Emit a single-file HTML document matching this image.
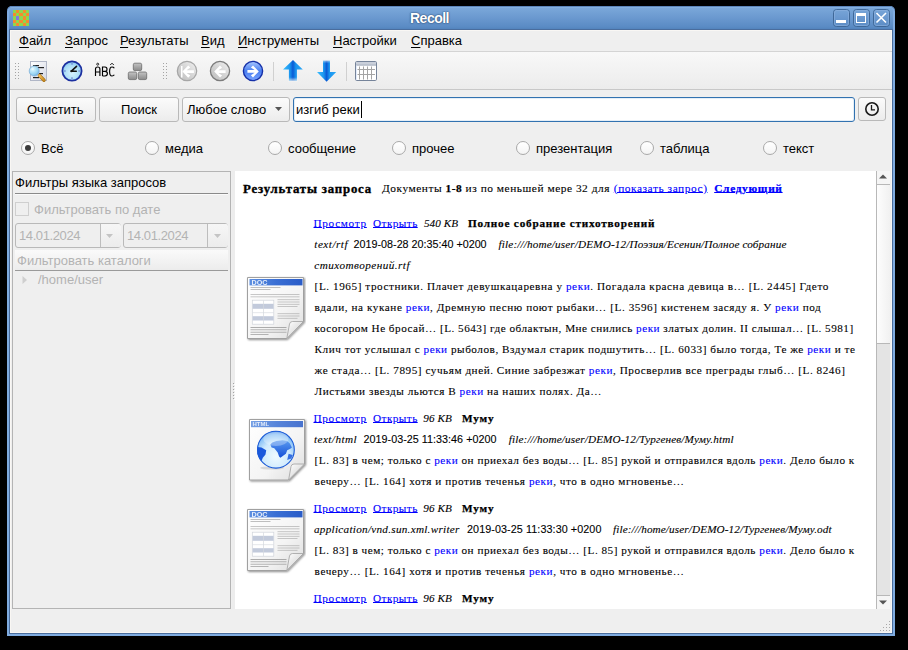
<!DOCTYPE html>
<html><head><meta charset="utf-8">
<style>
html,body{margin:0;padding:0;}
body{width:908px;height:650px;background:#000;position:relative;overflow:hidden;font-family:"Liberation Sans",sans-serif;font-size:13px;color:#000;}
.a{position:absolute;}
.t{position:absolute;white-space:nowrap;line-height:15px;}
.u{text-decoration:underline;text-underline-offset:1.5px;}
#win{left:7px;top:6px;width:888px;height:630px;background:#80ace0;border-radius:5px 5px 0 0;box-shadow:inset 0 1px 0 #5d86bb;}
#title{left:9px;top:7px;width:884px;height:22px;border-radius:4px 4px 0 0;background:linear-gradient(#8db9e7 0px,#7aa7d9 1px,#6a98cf 11px,#5a8bc4 20px,#5283bd 22px);}
#client{left:11px;top:31px;width:880px;height:601px;background:#efefef;}
.menu span{position:absolute;top:33px;line-height:15px;}
.tb{left:10px;top:52px;width:882px;height:37px;background:linear-gradient(#f8f8f8,#ececec);}
.btn{position:absolute;box-sizing:border-box;border:1px solid #b9b9b9;border-radius:3px;background:linear-gradient(#fbfbfb,#ececec);}
.radio{position:absolute;box-sizing:border-box;width:14px;height:14px;border-radius:50%;border:1px solid #a9a9a9;background:linear-gradient(#fff,#f4f4f4);}
.res{font-family:"Liberation Serif",serif;font-size:12.4px;}
.lk{color:#0000ff;text-decoration:underline;text-underline-offset:0px;}
.hl{color:#0000ff;}
.dis{color:#b3b3b3;}
.rl{position:absolute;white-space:nowrap;line-height:21px;font-family:"Liberation Serif",serif;-webkit-text-stroke:0.1px currentColor;}
.rl b{-webkit-text-stroke:0.25px currentColor;}
.sans{font-family:"Liberation Sans",sans-serif;font-size:10.75px;-webkit-text-stroke:0.1px currentColor;}
</style></head><body>
<!-- window frame -->
<div class="a" id="win"></div>
<div class="a" id="title"></div>
<div class="a" style="left:9px;top:29px;width:884px;height:605px;background:#4a6d9d"></div>
<div class="a" style="left:10px;top:30px;width:882px;height:603px;background:#f9f7f4"></div>
<!-- app icon -->
<svg class="a" style="left:13px;top:10px" width="16" height="16" viewBox="0 0 5 5" shape-rendering="crispEdges">
<rect width="5" height="5" fill="#8cd84e"/>
<rect x="1" y="0" width="1" height="1" fill="#f58a2e"/><rect x="3" y="0" width="1" height="1" fill="#f58a2e"/>
<rect x="0" y="1" width="1" height="1" fill="#f58a2e"/><rect x="2" y="1" width="1" height="1" fill="#f58a2e"/><rect x="4" y="1" width="1" height="1" fill="#f58a2e"/>
<rect x="1" y="2" width="1" height="1" fill="#8577e0"/><rect x="3" y="2" width="1" height="1" fill="#f58a2e"/>
<rect x="0" y="3" width="1" height="1" fill="#f58a2e"/><rect x="2" y="3" width="1" height="1" fill="#f58a2e"/><rect x="4" y="3" width="1" height="1" fill="#f58a2e"/>
<rect x="1" y="4" width="1" height="1" fill="#f58a2e"/><rect x="3" y="4" width="1" height="1" fill="#f58a2e"/>
</svg>
<div class="t" style="left:410px;top:10px;font-size:14px;font-weight:bold;color:#fff;line-height:17px;letter-spacing:-0.5px;text-shadow:0 0 1px #27476f,0 0 2px #27476f">Recoll</div>
<!-- title buttons -->
<svg class="a" style="left:832px;top:8px" width="60" height="20">
 <g fill="none">
  <rect x="1.5" y="1.5" width="16" height="17" rx="3" stroke="#3f6898" stroke-width="1"/>
  <rect x="2.5" y="2.5" width="14" height="15" rx="2" stroke="#8db3e0" stroke-width="1" opacity="0.6"/>
  <rect x="21.5" y="1.5" width="16" height="17" rx="3" stroke="#3f6898" stroke-width="1"/>
  <rect x="22.5" y="2.5" width="14" height="15" rx="2" stroke="#8db3e0" stroke-width="1" opacity="0.6"/>
  <rect x="41.5" y="1.5" width="16" height="17" rx="3" stroke="#3f6898" stroke-width="1"/>
  <rect x="42.5" y="2.5" width="14" height="15" rx="2" stroke="#8db3e0" stroke-width="1" opacity="0.6"/>
 </g>
 <rect x="4" y="12" width="10" height="3" fill="#fff"/>
 <rect x="24.5" y="5.5" width="9" height="9" fill="none" stroke="#fff" stroke-width="1"/>
 <rect x="24" y="5" width="10" height="3" fill="#fff"/>
 <path d="M44.5 5 L54 14.5 M54 5 L44.5 14.5" stroke="#fff" stroke-width="1.6"/>
</svg>
<!-- client -->
<div class="a" id="client"></div>
<!-- menu -->
<div class="menu">
<span style="left:19px"><span class="u" style="position:static">Ф</span>айл</span>
<span style="left:65px"><span class="u" style="position:static">З</span>апрос</span>
<span style="left:120px"><span class="u" style="position:static">Р</span>езультаты</span>
<span style="left:201px"><span class="u" style="position:static">В</span>ид</span>
<span style="left:238px"><span class="u" style="position:static">И</span>нструменты</span>
<span style="left:333px"><span class="u" style="position:static">Н</span>астройки</span>
<span style="left:411px"><span class="u" style="position:static">С</span>правка</span>
</div>
<div class="a" style="left:10px;top:51px;width:882px;height:1px;background:#d4d4d4"></div>
<div class="a tb"></div>
<div class="a" style="left:10px;top:89px;width:882px;height:1px;background:#c8c8c8"></div>

<!-- toolbar grips -->
<svg class="a" style="left:15px;top:62px" width="5" height="18"><g fill="#a4a4a4">
<rect x="0" y="1" width="1" height="1"/><rect x="3" y="1" width="1" height="1"/>
<rect x="0" y="4" width="1" height="1"/><rect x="3" y="4" width="1" height="1"/>
<rect x="0" y="7" width="1" height="1"/><rect x="3" y="7" width="1" height="1"/>
<rect x="0" y="10" width="1" height="1"/><rect x="3" y="10" width="1" height="1"/>
<rect x="0" y="13" width="1" height="1"/><rect x="3" y="13" width="1" height="1"/>
<rect x="0" y="16" width="1" height="1"/><rect x="3" y="16" width="1" height="1"/>
</g></svg>
<svg class="a" style="left:163px;top:62px" width="5" height="18"><g fill="#a4a4a4">
<rect x="0" y="1" width="1" height="1"/><rect x="3" y="1" width="1" height="1"/>
<rect x="0" y="4" width="1" height="1"/><rect x="3" y="4" width="1" height="1"/>
<rect x="0" y="7" width="1" height="1"/><rect x="3" y="7" width="1" height="1"/>
<rect x="0" y="10" width="1" height="1"/><rect x="3" y="10" width="1" height="1"/>
<rect x="0" y="13" width="1" height="1"/><rect x="3" y="13" width="1" height="1"/>
<rect x="0" y="16" width="1" height="1"/><rect x="3" y="16" width="1" height="1"/>
</g></svg>
<!-- search icon -->
<svg class="a" style="left:26px;top:58px" width="24" height="26" viewBox="0 0 24 26">
 <defs>
  <linearGradient id="pg" x1="0" y1="0" x2="1" y2="1"><stop offset="0" stop-color="#ffffff"/><stop offset="1" stop-color="#d4d8e4"/></linearGradient>
  <radialGradient id="lens" cx="0.35" cy="0.3" r="0.75"><stop offset="0" stop-color="#f4fcff"/><stop offset="0.25" stop-color="#c8ecfa"/><stop offset="0.7" stop-color="#98d4f2"/><stop offset="1" stop-color="#70aee0"/></radialGradient>
  <linearGradient id="hd" x1="0" y1="0" x2="1" y2="1"><stop offset="0" stop-color="#f5c35a"/><stop offset="1" stop-color="#c88a20"/></linearGradient>
 </defs>
 <rect x="4.5" y="3.5" width="16" height="19" fill="url(#pg)" stroke="#b0b6c6"/>
 <rect x="7" y="7" width="6" height="1.2" fill="#222"/>
 <rect x="12" y="9" width="6" height="1.2" fill="#222"/>
 <rect x="13" y="15" width="4" height="1.2" fill="#222"/>
 <rect x="7" y="19" width="6" height="1.2" fill="#222"/>
 <path d="M13.4 17.4 L18 22.2" stroke="#a8741c" stroke-width="3.4" stroke-linecap="round"/><path d="M13.4 17.4 L18 22.2" stroke="url(#hd)" stroke-width="2.2" stroke-linecap="round"/>
 <circle cx="8.2" cy="13" r="5" fill="url(#lens)" stroke="#7fb0d8" stroke-width="0.8"/>
</svg>
<!-- clock icon -->
<svg class="a" style="left:61px;top:60px" width="22" height="22" viewBox="0 0 22 22">
 <defs><radialGradient id="cf" cx="0.5" cy="0.6" r="0.6"><stop offset="0" stop-color="#d8f2ff"/><stop offset="0.7" stop-color="#a8dcf6"/><stop offset="1" stop-color="#7cc0ec"/></radialGradient></defs>
 <circle cx="11" cy="11" r="9.6" fill="url(#cf)" stroke="#1b2fa0" stroke-width="1.8"/>
 <g fill="#6a7fd0"><rect x="10.3" y="3.2" width="1.4" height="1.4"/><rect x="10.3" y="17.4" width="1.4" height="1.4"/><rect x="3.2" y="10.3" width="1.4" height="1.4"/><rect x="17.4" y="10.3" width="1.4" height="1.4"/></g>
 <path d="M15.5 6.3 L10.4 11.2 L15.3 11.2" fill="none" stroke="#111" stroke-width="1.6" stroke-linecap="round" stroke-linejoin="round"/>
 <circle cx="10.4" cy="11.2" r="1.1" fill="#111"/>
</svg>
<!-- ABC -->
<svg class="a" style="left:94px;top:62px" width="22" height="16" viewBox="0 0 22 16">
 <g fill="none" stroke="#000" stroke-width="1.15">
  <path d="M1.5 14 V7 Q1.5 5 3.7 5 Q5.9 5 5.9 7 V14 M1.5 10 H5.9"/>
  <path d="M8.5 14 V5 H11 Q13 5 13 7.2 Q13 9.3 11 9.3 H8.5 M11 9.3 Q13.4 9.3 13.4 11.6 Q13.4 14 11 14 H8.5"/>
  <path d="M20.3 6.2 Q19.6 5 18 5 Q15.6 5 15.6 9.5 Q15.6 14 18 14 Q19.6 14 20.3 12.8"/>
  <path d="M16.2 3 L18 1.2 L19.8 3" stroke-width="0.9"/>
 </g>
 <circle cx="3.7" cy="2.2" r="1" fill="none" stroke="#000" stroke-width="0.8"/>
</svg>
<!-- blocks -->
<svg class="a" style="left:127px;top:62px" width="22" height="19" viewBox="0 0 22 19">
 <defs><linearGradient id="bk" x1="0" y1="0" x2="0" y2="1"><stop offset="0" stop-color="#c4c4c4"/><stop offset="1" stop-color="#8a8a8a"/></linearGradient></defs>
 <rect x="6.3" y="1.2" width="8.4" height="7.4" rx="1.5" fill="url(#bk)" stroke="#6a6a6a" stroke-width="0.8"/>
 <rect x="1.3" y="10" width="8.4" height="7.6" rx="1.5" fill="url(#bk)" stroke="#6a6a6a" stroke-width="0.8"/>
 <rect x="11.3" y="10" width="8.4" height="7.6" rx="1.5" fill="url(#bk)" stroke="#6a6a6a" stroke-width="0.8"/>
</svg>
<!-- first/prev/next -->
<svg class="a" style="left:176px;top:60px" width="22" height="22" viewBox="0 0 22 22">
 <defs><linearGradient id="gr1" x1="1" y1="0" x2="0" y2="1"><stop offset="0" stop-color="#f2f2f2"/><stop offset="0.5" stop-color="#d4d4d4"/><stop offset="1" stop-color="#bcbcbc"/></linearGradient></defs>
 <circle cx="11" cy="11" r="9.7" fill="url(#gr1)" stroke="#a6a6a6" stroke-width="1.2"/>
 <rect x="5" y="6" width="1.5" height="11.5" fill="#fff"/>
 <path d="M6.4 11.6 L12.2 5.5 L14.3 7.6 L10.6 10.3 H17.9 V12.9 H10.6 L14.3 15.6 L12.2 17.7 Z" fill="#fff"/>
</svg>
<svg class="a" style="left:209px;top:60px" width="22" height="22" viewBox="0 0 22 22">
 <circle cx="11" cy="11" r="9.6" fill="url(#gr1)" stroke="#7c7c7c" stroke-width="1.3"/>
 <path d="M5.2 11.6 L11 5.6 L13.1 7.7 L9.4 10.3 H16.6 V12.9 H9.4 L13.1 15.5 L11 17.6 Z" fill="#fff"/>
</svg>
<svg class="a" style="left:242px;top:60px" width="22" height="22" viewBox="0 0 22 22">
 <defs><linearGradient id="bl1" x1="0" y1="0" x2="0" y2="1"><stop offset="0" stop-color="#a8c8ff"/><stop offset="0.5" stop-color="#4a7ef0"/><stop offset="1" stop-color="#7aa4ff"/></linearGradient></defs>
 <circle cx="11" cy="11" r="9.6" fill="url(#bl1)" stroke="#1530a8" stroke-width="1.4"/>
 <path d="M16.8 11.4 L11 5.4 L8.9 7.5 L12.6 10.1 H5.4 V12.7 H12.6 L8.9 15.3 L11 17.4 Z" fill="#fff"/>
</svg>
<div class="a" style="left:273px;top:62px;width:1px;height:19px;background:#d0d0d0"></div>
<!-- up/down arrows -->
<svg class="a" style="left:282px;top:59px" width="22" height="23" viewBox="0 0 22 23">
 <defs><linearGradient id="ar" x1="0" y1="0" x2="1" y2="0"><stop offset="0" stop-color="#3cc0ff"/><stop offset="0.35" stop-color="#1a94ee"/><stop offset="0.5" stop-color="#0a5ad4"/><stop offset="0.65" stop-color="#1a94ee"/><stop offset="1" stop-color="#2aa8f8"/></linearGradient>
 <linearGradient id="arfu" x1="0" y1="0" x2="0" y2="1"><stop offset="0" stop-color="#f2f2f2" stop-opacity="0"/><stop offset="0.6" stop-color="#f2f2f2" stop-opacity="0"/><stop offset="1" stop-color="#f2f2f2" stop-opacity="0.95"/></linearGradient>
 <linearGradient id="arfd" x1="0" y1="0" x2="0" y2="1"><stop offset="0" stop-color="#f4f4f4" stop-opacity="0.9"/><stop offset="0.35" stop-color="#f4f4f4" stop-opacity="0"/><stop offset="1" stop-color="#f4f4f4" stop-opacity="0"/></linearGradient></defs>
 <path d="M11 1 L20.8 10.6 H14.9 V22 H6.9 V10.6 H1 Z" fill="url(#ar)"/>
 <rect x="6" y="11" width="10" height="12" fill="url(#arfu)"/>
</svg>
<svg class="a" style="left:316px;top:59px" width="22" height="24" viewBox="0 0 22 24">
 <path d="M10.6 22.8 L20.2 12.9 H14 V1.5 H7 V12.9 H1 Z" fill="url(#ar)"/>
 <rect x="6" y="0" width="10" height="12" fill="url(#arfd)"/>
</svg>
<div class="a" style="left:346px;top:62px;width:1px;height:19px;background:#d0d0d0"></div>
<!-- table icon -->
<svg class="a" style="left:354px;top:60px" width="24" height="22" viewBox="0 0 24 22">
 <rect x="1.5" y="1.5" width="21" height="19" rx="1.2" fill="#fff" stroke="#76849a"/>
 <rect x="2" y="2" width="20" height="2.6" fill="#c9cfda"/>
 <rect x="2" y="4.6" width="20" height="0.9" fill="#8794a8"/>
 <rect x="2" y="5.5" width="0.8" height="14.5" fill="#dce8fa"/>
 <g fill="#a4a4a4"><rect x="3.5" y="9" width="17.5" height="1"/><rect x="3.5" y="14" width="17.5" height="1"/>
 <rect x="5" y="6.5" width="1" height="13"/><rect x="9" y="6.5" width="1" height="13"/><rect x="13" y="6.5" width="1" height="13"/><rect x="17" y="6.5" width="1" height="13"/></g>
</svg>


<!-- search row -->
<div class="btn" style="left:16px;top:97px;width:80px;height:25px"></div>
<div class="t" style="left:27px;top:102px">Очистить</div>
<div class="btn" style="left:99px;top:97px;width:80px;height:25px"></div>
<div class="t" style="left:121px;top:102px">Поиск</div>
<div class="btn" style="left:182px;top:97px;width:108px;height:25px"></div>
<div class="t" style="left:187px;top:102px">Любое слово</div>
<svg class="a" style="left:275px;top:107px" width="7" height="4"><path d="M0 0 H7 L3.5 4 Z" fill="#555"/></svg>
<div class="a" style="left:293px;top:97px;width:562px;height:25px;box-sizing:border-box;border:1px solid #3272b0;border-radius:3px;background:#fff;box-shadow:inset 0 0 0 1px rgba(120,170,215,0.2)"></div>
<div class="t" style="left:296px;top:102px">изгиб реки</div>
<div class="a" style="left:361px;top:101px;width:1px;height:17px;background:#000"></div>
<div class="btn" style="left:858px;top:97px;width:28px;height:24px"></div>
<svg class="a" style="left:864px;top:101px" width="16" height="16" viewBox="0 0 16 16"><circle cx="8" cy="8" r="6.2" fill="none" stroke="#1a1a1a" stroke-width="1.6"/><path d="M7.5 4 V8.8 H11" fill="none" stroke="#1a1a1a" stroke-width="1.3"/></svg>
<!-- radio row -->
<div class="radio" style="left:21px;top:141px"></div><div class="a" style="left:25px;top:145px;width:6px;height:6px;border-radius:50%;background:#3a3a3a"></div>
<div class="t" style="left:41px;top:141px">Всё</div>
<div class="radio" style="left:145px;top:141px"></div><div class="t" style="left:165px;top:141px">медиа</div>
<div class="radio" style="left:268px;top:141px"></div><div class="t" style="left:288px;top:141px">сообщение</div>
<div class="radio" style="left:392px;top:141px"></div><div class="t" style="left:412px;top:141px">прочее</div>
<div class="radio" style="left:516px;top:141px"></div><div class="t" style="left:536px;top:141px">презентация</div>
<div class="radio" style="left:640px;top:141px"></div><div class="t" style="left:660px;top:141px">таблица</div>
<div class="radio" style="left:763px;top:141px"></div><div class="t" style="left:783px;top:141px">текст</div>
<!-- left panel -->
<div class="a" style="left:12px;top:171px;width:219px;height:438px;box-sizing:border-box;border:1px solid #b4b4b4"></div>
<div class="t" style="left:15px;top:175px">Фильтры языка запросов</div>
<div class="a" style="left:15px;top:193px;width:213px;height:1px;background:#8a8a8a"></div>
<div class="a" style="left:15px;top:194px;width:213px;height:1px;background:#fafafa"></div>
<div class="a" style="left:15px;top:202px;width:14px;height:14px;box-sizing:border-box;border:1px solid #cfcfcf;background:#efefef"></div>
<div class="t dis" style="left:34px;top:202px">Фильтровать по дате</div>
<div class="a" style="left:15px;top:223px;width:106px;height:25px;box-sizing:border-box;border:1px solid #b9b9b9;border-radius:3px;background:#efefef"></div>
<div class="a" style="left:100px;top:224px;width:20px;height:23px;border-left:1px solid #bdbdbd;background:linear-gradient(#f6f6f6,#ececec);border-radius:0 2px 2px 0"></div>
<svg class="a" style="left:106px;top:234px" width="7" height="4"><path d="M0 0 H7 L3.5 4 Z" fill="#c4c4c4"/></svg>
<div class="t dis" style="left:19px;top:228px;letter-spacing:-0.4px">14.01.2024</div>
<div class="a" style="left:123px;top:223px;width:105px;height:25px;box-sizing:border-box;border:1px solid #b9b9b9;border-radius:3px;background:#efefef"></div>
<div class="a" style="left:207px;top:224px;width:20px;height:23px;border-left:1px solid #bdbdbd;background:linear-gradient(#f6f6f6,#ececec);border-radius:0 2px 2px 0"></div>
<svg class="a" style="left:214px;top:234px" width="7" height="4"><path d="M0 0 H7 L3.5 4 Z" fill="#c4c4c4"/></svg>
<div class="t dis" style="left:127px;top:228px;letter-spacing:-0.4px">14.01.2024</div>
<div class="a" style="left:15px;top:250px;width:213px;height:20px;background:linear-gradient(#fafafa,#ececec)"></div>
<div class="a" style="left:15px;top:270px;width:213px;height:1px;background:#9a9a9a"></div>
<div class="t dis" style="left:17px;top:253px">Фильтровать каталоги</div>
<svg class="a" style="left:22px;top:276px" width="6" height="8"><path d="M0.5 0 L5 4 L0.5 8 Z" fill="#cfcfcf"/></svg>
<div class="t dis" style="left:38px;top:272px">/home/user</div>
<!-- splitter -->
<div class="a" style="left:232px;top:171px;width:3px;height:438px;background:#ededed"></div>
<svg class="a" style="left:233px;top:383px" width="2" height="17"><g fill="#a4a4a4"><rect x="0" y="0" width="1" height="1"/><rect x="0" y="3" width="1" height="1"/><rect x="0" y="6" width="1" height="1"/><rect x="0" y="9" width="1" height="1"/><rect x="0" y="12" width="1" height="1"/><rect x="0" y="15" width="1" height="1"/></g><g fill="#fff"><rect x="1" y="1" width="1" height="1"/><rect x="1" y="4" width="1" height="1"/><rect x="1" y="7" width="1" height="1"/><rect x="1" y="10" width="1" height="1"/><rect x="1" y="13" width="1" height="1"/><rect x="1" y="16" width="1" height="1"/></g></svg>
<!-- results panel -->
<div class="a" style="left:235px;top:171px;width:641px;height:438px;background:#fff"></div>
<svg width="0" height="0" style="position:absolute">
 <defs>
  <linearGradient id="docpg" x1="0" y1="0" x2="1" y2="1"><stop offset="0" stop-color="#ffffff"/><stop offset="0.6" stop-color="#f4f4f4"/><stop offset="1" stop-color="#dcdcdc"/></linearGradient>
  <linearGradient id="docbar" x1="0" y1="0" x2="1" y2="0"><stop offset="0" stop-color="#5d8fe0"/><stop offset="0.5" stop-color="#3a6fd4"/><stop offset="1" stop-color="#2a5cc8"/></linearGradient>
  <linearGradient id="fold" x1="0" y1="0" x2="1" y2="1"><stop offset="0" stop-color="#ffffff"/><stop offset="1" stop-color="#c8c8c8"/></linearGradient>
  <radialGradient id="globe" cx="0.5" cy="0.68" r="0.75"><stop offset="0" stop-color="#effaff"/><stop offset="0.5" stop-color="#cfeafd"/><stop offset="0.78" stop-color="#8ac2f6"/><stop offset="1" stop-color="#2a6ee0"/></radialGradient>
  <linearGradient id="cont" x1="0" y1="0" x2="0" y2="1"><stop offset="0" stop-color="#5a9af0"/><stop offset="1" stop-color="#1550d8"/></linearGradient>
  <filter id="sh" x="-10%" y="-10%" width="130%" height="130%"><feGaussianBlur in="SourceAlpha" stdDeviation="0.8"/><feOffset dx="0.6" dy="0.8"/><feComponentTransfer><feFuncA type="linear" slope="0.45"/></feComponentTransfer><feMerge><feMergeNode/><feMergeNode in="SourceGraphic"/></feMerge></filter>
 </defs>
</svg>
<div class="a" style="left:235px;top:171px;width:641px;height:437px;overflow:hidden"><div class="a" style="left:-235px;top:-171px;width:908px;height:650px">
<svg class="a" style="left:246px;top:276px" width="60" height="66" viewBox="0 0 60 66">
 <g filter="url(#sh)">
 <path d="M1.5 1.5 H57.5 V45.5 L40.8 62.5 H1.5 Z" fill="url(#docpg)" stroke="#a0a0a0" stroke-width="1"/>
 </g>
 <rect x="3.5" y="3" width="53" height="6.4" fill="url(#docbar)"/>
 <text x="5.5" y="9" font-family="Liberation Sans" font-weight="bold" font-size="7.2" fill="#fff" opacity="0.85">DOC</text>
 <g fill="#909090" opacity="0.8">
  <rect x="4.5" y="11" width="30" height="0.7"/><rect x="4.5" y="13" width="20" height="0.7"/>
  <rect x="4.5" y="18.2" width="49" height="0.6"/><rect x="4.5" y="20.6" width="49" height="0.6"/>
  <rect x="31.5" y="23.5" width="22" height="0.6"/><rect x="31.5" y="25.7" width="22" height="0.6"/><rect x="31.5" y="27.9" width="22" height="0.6"/><rect x="31.5" y="30.1" width="20" height="0.6"/>
  <rect x="31.5" y="37.5" width="22" height="0.6"/><rect x="31.5" y="39.7" width="22" height="0.6"/><rect x="31.5" y="41.9" width="20" height="0.6"/>
  <rect x="4.5" y="51" width="36" height="0.9"/><rect x="4.5" y="53.4" width="36" height="0.8"/><rect x="4.5" y="55.8" width="36" height="0.8"/><rect x="4.5" y="58.2" width="18" height="0.8"/>
 </g>
 <rect x="6.3" y="24.2" width="21.5" height="24" fill="#fff" stroke="#d0d4da" stroke-width="0.7"/>
 <rect x="6.6" y="27.8" width="21" height="5" fill="#c2cadb"/>
 <rect x="6.6" y="40.2" width="21" height="4.3" fill="#c2cadb"/>
 <g fill="#d4d8de"><rect x="17.2" y="24.5" width="0.7" height="23.5"/><rect x="6.6" y="36.5" width="21" height="0.6"/></g>
 <path d="M40.8 62.5 L43.5 48 Q44 45.5 46.5 45.5 L57.5 45.5 Z" fill="url(#fold)" stroke="#a0a0a0" stroke-width="0.8"/>
</svg>
<svg class="a" style="left:248px;top:418px" width="60" height="66" viewBox="0 0 60 66">
 <g filter="url(#sh)">
 <path d="M1.5 1.5 H56.5 V46 L40.6 62 H1.5 Z" fill="url(#docpg)" stroke="#a0a0a0" stroke-width="1"/>
 </g>
 <rect x="3" y="3" width="52" height="6.2" fill="url(#docbar)" opacity="0.85"/>
 <text x="4.5" y="8.3" font-family="Liberation Sans" font-weight="bold" font-size="6" fill="#fff" opacity="0.8">HTML</text>
 <ellipse cx="24" cy="50" rx="12" ry="1.6" fill="#000" opacity="0.12"/>
 <circle cx="27.9" cy="31.7" r="18.6" fill="url(#globe)"/>
 <path d="M22.3 26.6 L24.3 24.6 L28.4 22.9 L34.5 22.2 L39.2 22.9 L41.9 25.6 L43.9 29.6 L41.9 31 L39.2 32.3 L37.9 35.7 L35.1 37.8 L32.4 39.8 L31.1 38.4 L29.7 34.4 L26.3 30.3 L23.6 29.6 Z" fill="url(#cont)"/>
 <path d="M9.4 29 L13.5 29.6 L18.2 32.3 L17.5 36.4 L14.8 39.8 L13.5 43.2 L11.4 40.5 L9.4 35.7 Z" fill="#1a58dc"/>
 <path d="M40.6 35.7 L44.6 37.1 L43.3 40.5 L39.2 42 Z" fill="#1a58dc" opacity="0.85"/>
 <circle cx="27.9" cy="31.7" r="18.4" fill="none" stroke="#1b5ad6" stroke-width="1.1"/>
 <ellipse cx="27.9" cy="21" rx="12.5" ry="7" fill="#fff" opacity="0.3"/>
 <path d="M40.6 62 L43 48.5 Q43.5 46 46 46 L56.5 46 Z" fill="url(#fold)" stroke="#a0a0a0" stroke-width="0.8"/>
</svg>
<svg class="a" style="left:246px;top:508px" width="60" height="66" viewBox="0 0 60 66">
 <g filter="url(#sh)">
 <path d="M1.5 1.5 H57.5 V45.5 L40.8 62.5 H1.5 Z" fill="url(#docpg)" stroke="#a0a0a0" stroke-width="1"/>
 </g>
 <rect x="3.5" y="3" width="53" height="6.4" fill="url(#docbar)"/>
 <text x="5.5" y="9" font-family="Liberation Sans" font-weight="bold" font-size="7.2" fill="#fff" opacity="0.85">DOC</text>
 <g fill="#909090" opacity="0.8">
  <rect x="4.5" y="11" width="30" height="0.7"/><rect x="4.5" y="13" width="20" height="0.7"/>
  <rect x="4.5" y="18.2" width="49" height="0.6"/><rect x="4.5" y="20.6" width="49" height="0.6"/>
  <rect x="31.5" y="23.5" width="22" height="0.6"/><rect x="31.5" y="25.7" width="22" height="0.6"/><rect x="31.5" y="27.9" width="22" height="0.6"/><rect x="31.5" y="30.1" width="20" height="0.6"/>
  <rect x="31.5" y="37.5" width="22" height="0.6"/><rect x="31.5" y="39.7" width="22" height="0.6"/><rect x="31.5" y="41.9" width="20" height="0.6"/>
  <rect x="4.5" y="51" width="36" height="0.9"/><rect x="4.5" y="53.4" width="36" height="0.8"/><rect x="4.5" y="55.8" width="36" height="0.8"/><rect x="4.5" y="58.2" width="18" height="0.8"/>
 </g>
 <rect x="6.3" y="24.2" width="21.5" height="24" fill="#fff" stroke="#d0d4da" stroke-width="0.7"/>
 <rect x="6.6" y="27.8" width="21" height="5" fill="#c2cadb"/>
 <rect x="6.6" y="40.2" width="21" height="4.3" fill="#c2cadb"/>
 <g fill="#d4d8de"><rect x="17.2" y="24.5" width="0.7" height="23.5"/><rect x="6.6" y="36.5" width="21" height="0.6"/></g>
 <path d="M40.8 62.5 L43.5 48 Q44 45.5 46.5 45.5 L57.5 45.5 Z" fill="url(#fold)" stroke="#a0a0a0" stroke-width="0.8"/>
</svg>
<!--RES-->
<div class="rl" style="left:243px;top:179.08px;font-size:12.8px;letter-spacing:0.821px;font-weight:bold;-webkit-text-stroke:0.35px #000">Результаты запроса</div>
<div class="rl" style="left:382px;top:178.45px;font-size:11.399999999999999px;letter-spacing:0.526px;">Документы <b>1-8</b> из по меньшей мере 32 для</div>
<div class="rl" style="left:613.8px;top:178.45px;font-size:11.399999999999999px;letter-spacing:0.552px;"><span class="lk">(показать запрос)</span></div>
<div class="rl" style="left:714.2px;top:178.45px;font-size:11.399999999999999px;letter-spacing:0.663px;"><b class="lk">Следующий</b></div>
<div class="rl" style="left:313.5px;top:212.62px;font-size:11.2px;letter-spacing:0.704px;"><span class="lk">Просмотр</span></div>
<div class="rl" style="left:373px;top:212.62px;font-size:11.2px;letter-spacing:0.456px;"><span class="lk">Открыть</span></div>
<div class="rl" style="left:424px;top:212.62px;font-size:11.2px;letter-spacing:0.021px;"><i>540 KB</i></div>
<div class="rl" style="left:468px;top:212.62px;font-size:11.2px;letter-spacing:0.805px;"><b>Полное собрание стихотворений</b></div>
<div class="rl" style="left:314.3px;top:233.62px;font-size:11.2px;letter-spacing:0.483px;"><i>text/rtf</i></div>
<div class="rl" style="left:353.6px;top:233.62px;font-size:11.2px;letter-spacing:0.000px;"><span class="sans">2019-08-28 20:35:40 +0200</span></div>
<div class="rl" style="left:498.6px;top:233.62px;font-size:11.2px;letter-spacing:0.134px;"><i>file:///home/user/DEMO-12/Поэзия/Есенин/Полное собрание</i></div>
<div class="rl" style="left:314.3px;top:254.62px;font-size:11.2px;letter-spacing:0.454px;"><i>стихотворений.rtf</i></div>
<div class="rl" style="left:314.6px;top:275.62px;font-size:11.2px;letter-spacing:0.568px;">[L. 1965] тростники. Плачет девушкацаревна у <span class="hl">реки</span>. Погадала красна девица в… [L. 2445] Гдето</div>
<div class="rl" style="left:314.6px;top:296.62px;font-size:11.2px;letter-spacing:0.570px;">вдали, на кукане <span class="hl">реки</span>, Дремную песню поют рыбаки… [L. 3596] кистенем засяду я. У <span class="hl">реки</span> под</div>
<div class="rl" style="left:314.6px;top:317.62px;font-size:11.2px;letter-spacing:0.491px;">косогором Не бросай… [L. 5643] где облактын, Мне снились <span class="hl">реки</span> златых долин. II слышал… [L. 5981]</div>
<div class="rl" style="left:314.6px;top:338.62px;font-size:11.2px;letter-spacing:0.532px;">Клич тот услышал с <span class="hl">реки</span> рыболов, Вздумал старик подшутить… [L. 6033] было тогда, Те же <span class="hl">реки</span> и те</div>
<div class="rl" style="left:314.6px;top:359.62px;font-size:11.2px;letter-spacing:0.542px;">же стада… [L. 7895] сучьям дней. Синие забрезжат <span class="hl">реки</span>, Просверлив все преграды глыб… [L. 8246]</div>
<div class="rl" style="left:314.6px;top:380.62px;font-size:11.2px;letter-spacing:0.534px;">Листьями звезды льются В <span class="hl">реки</span> на наших полях. Да…</div>
<div class="rl" style="left:313.5px;top:407.62px;font-size:11.2px;letter-spacing:0.704px;"><span class="lk">Просмотр</span></div>
<div class="rl" style="left:373px;top:407.62px;font-size:11.2px;letter-spacing:0.456px;"><span class="lk">Открыть</span></div>
<div class="rl" style="left:423.3px;top:407.62px;font-size:11.2px;letter-spacing:0.082px;"><i>96 KB</i></div>
<div class="rl" style="left:462px;top:407.62px;font-size:11.2px;letter-spacing:0.807px;"><b>Муму</b></div>
<div class="rl" style="left:314px;top:428.62px;font-size:11.2px;letter-spacing:0.427px;"><i>text/html</i></div>
<div class="rl" style="left:363.5px;top:428.62px;font-size:11.2px;letter-spacing:0.032px;"><span class="sans">2019-03-25 11:33:46 +0200</span></div>
<div class="rl" style="left:508.8px;top:428.62px;font-size:11.2px;letter-spacing:0.117px;"><i>file:///home/user/DEMO-12/Тургенев/Муму.html</i></div>
<div class="rl" style="left:314.6px;top:449.62px;font-size:11.2px;letter-spacing:0.507px;">[L. 83] в чем; только с <span class="hl">реки</span> он приехал без воды… [L. 85] рукой и отправился вдоль <span class="hl">реки</span>. Дело было к</div>
<div class="rl" style="left:314.6px;top:470.62px;font-size:11.2px;letter-spacing:0.565px;">вечеру… [L. 164] хотя и против теченья <span class="hl">реки</span>, что в одно мгновенье…</div>
<div class="rl" style="left:313.5px;top:497.62px;font-size:11.2px;letter-spacing:0.704px;"><span class="lk">Просмотр</span></div>
<div class="rl" style="left:373px;top:497.62px;font-size:11.2px;letter-spacing:0.456px;"><span class="lk">Открыть</span></div>
<div class="rl" style="left:423.3px;top:497.62px;font-size:11.2px;letter-spacing:0.082px;"><i>96 KB</i></div>
<div class="rl" style="left:462px;top:497.62px;font-size:11.2px;letter-spacing:0.807px;"><b>Муму</b></div>
<div class="rl" style="left:314px;top:518.62px;font-size:11.2px;letter-spacing:0.265px;"><i>application/vnd.sun.xml.writer</i></div>
<div class="rl" style="left:467px;top:518.62px;font-size:11.2px;letter-spacing:0.092px;"><span class="sans">2019-03-25 11:33:30 +0200</span></div>
<div class="rl" style="left:613px;top:518.62px;font-size:11.2px;letter-spacing:0.108px;"><i>file:///home/user/DEMO-12/Тургенев/Муму.odt</i></div>
<div class="rl" style="left:314.6px;top:539.62px;font-size:11.2px;letter-spacing:0.507px;">[L. 83] в чем; только с <span class="hl">реки</span> он приехал без воды… [L. 85] рукой и отправился вдоль <span class="hl">реки</span>. Дело было к</div>
<div class="rl" style="left:314.6px;top:560.62px;font-size:11.2px;letter-spacing:0.565px;">вечеру… [L. 164] хотя и против теченья <span class="hl">реки</span>, что в одно мгновенье…</div>
<div class="rl" style="left:313.5px;top:587.62px;font-size:11.2px;letter-spacing:0.704px;"><span class="lk">Просмотр</span></div>
<div class="rl" style="left:373px;top:587.62px;font-size:11.2px;letter-spacing:0.456px;"><span class="lk">Открыть</span></div>
<div class="rl" style="left:423.3px;top:587.62px;font-size:11.2px;letter-spacing:0.082px;"><i>96 KB</i></div>
<div class="rl" style="left:462px;top:587.62px;font-size:11.2px;letter-spacing:0.807px;"><b>Муму</b></div>
<!--/RES-->
</div></div>
<!-- scrollbar -->
<div class="a" style="left:876px;top:171px;width:14px;height:438px;background:#f5f5f5;border-left:1px solid #b8b8b8;box-sizing:border-box"></div>
<svg class="a" style="left:879px;top:174px" width="8" height="5"><path d="M0 4.5 H8 L4 0.5 Z" fill="#555"/></svg>
<div class="a" style="left:877px;top:184px;width:13px;height:1px;background:#b8b8b8"></div>
<div class="a" style="left:877px;top:185px;width:13px;height:158px;background:linear-gradient(90deg,#fdfdfd,#f1f1f1)"></div>
<div class="a" style="left:877px;top:343px;width:13px;height:1px;background:#b8b8b8"></div>
<div class="a" style="left:877px;top:344px;width:13px;height:251px;background:#e4e4e4"></div>
<div class="a" style="left:877px;top:595px;width:13px;height:1px;background:#b8b8b8"></div>
<svg class="a" style="left:879px;top:600px" width="8" height="5"><path d="M0 0.5 H8 L4 4.5 Z" fill="#555"/></svg>
<!-- size grip -->
<svg class="a" style="left:880px;top:620px" width="12" height="12"><g fill="#a8a8a8">
<rect x="9" y="1" width="1" height="1"/><rect x="6" y="4" width="1" height="1"/><rect x="9" y="4" width="1" height="1"/>
<rect x="3" y="7" width="1" height="1"/><rect x="6" y="7" width="1" height="1"/><rect x="9" y="7" width="1" height="1"/>
<rect x="0" y="10" width="1" height="1"/><rect x="3" y="10" width="1" height="1"/><rect x="6" y="10" width="1" height="1"/><rect x="9" y="10" width="1" height="1"/>
</g></svg>

</body></html>
